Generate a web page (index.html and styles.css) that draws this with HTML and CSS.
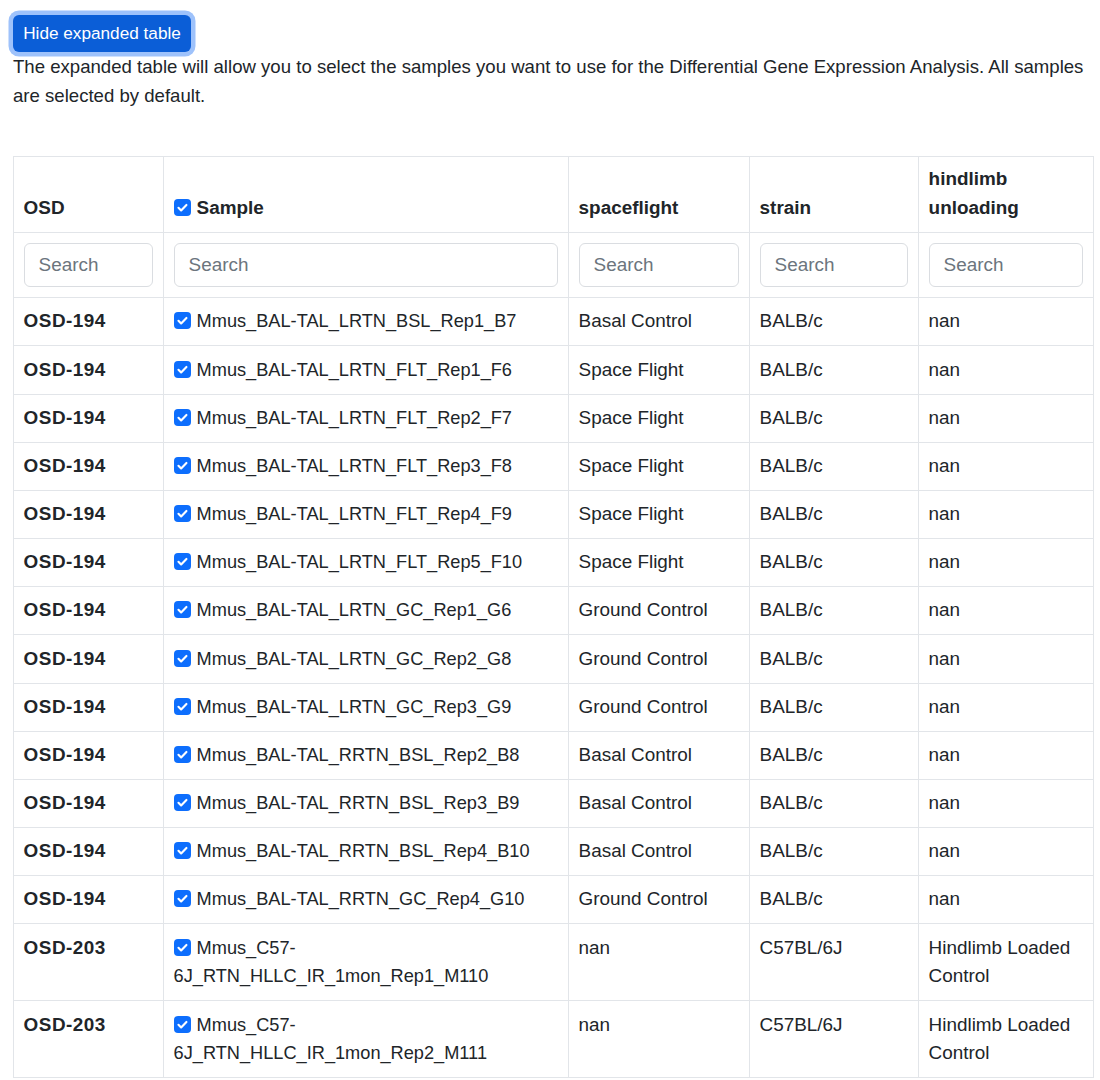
FILE: index.html
```html
<!DOCTYPE html>
<html lang="en">
<head>
<meta charset="utf-8">
<title>Expanded table</title>
<link rel="stylesheet" href="styles.css">
</head>
<body>
<div class="page">
  <button class="btn">Hide expanded table</button>
  <p class="intro">The expanded table will allow you to select the samples you want to use for the Differential Gene Expression Analysis. All samples are selected by default.</p>
  <table class="tbl">
    <colgroup>
      <col class="c-osd"><col class="c-sample"><col class="c-flight"><col class="c-strain"><col class="c-hind">
    </colgroup>
    <thead>
      <tr class="head">
        <th>OSD</th>
        <th><span class="cb"><svg viewBox="0 0 16 16"><path d="M4.2 8.3l2.5 2.5 5-5.2" fill="none" stroke="#fff" stroke-width="2" stroke-linecap="round" stroke-linejoin="round"/></svg></span>Sample</th>
        <th>spaceflight</th>
        <th>strain</th>
        <th>hindlimb unloading</th>
      </tr>
      <tr class="search">
        <th><input class="inp" placeholder="Search"></th>
        <th><input class="inp" placeholder="Search"></th>
        <th><input class="inp" placeholder="Search"></th>
        <th><input class="inp" placeholder="Search"></th>
        <th><input class="inp" placeholder="Search"></th>
      </tr>
    </thead>
    <tbody id="rows"></tbody>
  </table>
</div>
<script src="app.js"></script>
</body>
</html>
```
FILE: app.js
```js
const data = [
  ["OSD-194","Mmus_BAL-TAL_LRTN_BSL_Rep1_B7","Basal Control","BALB/c","nan"],
  ["OSD-194","Mmus_BAL-TAL_LRTN_FLT_Rep1_F6","Space Flight","BALB/c","nan"],
  ["OSD-194","Mmus_BAL-TAL_LRTN_FLT_Rep2_F7","Space Flight","BALB/c","nan"],
  ["OSD-194","Mmus_BAL-TAL_LRTN_FLT_Rep3_F8","Space Flight","BALB/c","nan"],
  ["OSD-194","Mmus_BAL-TAL_LRTN_FLT_Rep4_F9","Space Flight","BALB/c","nan"],
  ["OSD-194","Mmus_BAL-TAL_LRTN_FLT_Rep5_F10","Space Flight","BALB/c","nan"],
  ["OSD-194","Mmus_BAL-TAL_LRTN_GC_Rep1_G6","Ground Control","BALB/c","nan"],
  ["OSD-194","Mmus_BAL-TAL_LRTN_GC_Rep2_G8","Ground Control","BALB/c","nan"],
  ["OSD-194","Mmus_BAL-TAL_LRTN_GC_Rep3_G9","Ground Control","BALB/c","nan"],
  ["OSD-194","Mmus_BAL-TAL_RRTN_BSL_Rep2_B8","Basal Control","BALB/c","nan"],
  ["OSD-194","Mmus_BAL-TAL_RRTN_BSL_Rep3_B9","Basal Control","BALB/c","nan"],
  ["OSD-194","Mmus_BAL-TAL_RRTN_BSL_Rep4_B10","Basal Control","BALB/c","nan"],
  ["OSD-194","Mmus_BAL-TAL_RRTN_GC_Rep4_G10","Ground Control","BALB/c","nan"],
  ["OSD-203","Mmus_C57-6J_RTN_HLLC_IR_1mon_Rep1_M110","nan","C57BL/6J","Hindlimb Loaded Control"],
  ["OSD-203","Mmus_C57-6J_RTN_HLLC_IR_1mon_Rep2_M111","nan","C57BL/6J","Hindlimb Loaded Control"]
];
const check = '<span class="cb"><svg viewBox="0 0 16 16"><path d="M4.2 8.3l2.5 2.5 5-5.2" fill="none" stroke="#fff" stroke-width="2" stroke-linecap="round" stroke-linejoin="round"/></svg></span>';
const tb = document.getElementById('rows');
tb.innerHTML = data.map(r =>
  `<tr><td class="osd">${r[0]}</td><td class="sample">${check}${r[1]}</td><td>${r[2]}</td><td>${r[3]}</td><td>${r[4]}</td></tr>`
).join('');
```
FILE: styles.css
```css
html, body {
  margin: 0;
  padding: 0;
  background: #fff;
}
body {
  font-family: "Liberation Sans", Arial, sans-serif;
  font-size: 18.9px;
  line-height: 28.8px;
  color: #212529;
}
.page {
  padding: 15px 7px 0 13px;
}
.btn {
  display: block;
  height: 37px;
  width: 178px;
  padding: 0;
  border: none;
  border-radius: 6px;
  background: #0b5ed7;
  color: #fff;
  font-family: "Liberation Sans", Arial, sans-serif;
  font-size: 17.2px;
  box-shadow: 0 0 0 4.5px #9ec2fb;
}
.intro {
  font-size: 18.6px;
  margin: 1px 0 45px 0;
}
.tbl {
  width: 1080px;
  border-collapse: collapse;
  table-layout: fixed;
}
.c-osd { width: 150px; }
.c-sample { width: 405px; }
.c-flight { width: 181px; }
.c-strain { width: 169px; }
.c-hind { width: 175px; }
.tbl th, .tbl td {
  border: 1px solid #e2e5e9;
  padding: 9.2px 9.6px;
  text-align: left;
  vertical-align: top;
}
.tbl thead tr.head th {
  vertical-align: bottom;
  font-weight: bold;
  padding-top: 8.6px;
  padding-bottom: 9.4px;
}
.tbl tr.search th {
  padding: 10px 9.6px;
  font-weight: normal;
}
.osd {
  font-weight: bold;
  letter-spacing: 0.5px;
}
.sample {
  font-size: 18.2px;
}
.inp {
  display: block;
  box-sizing: border-box;
  width: 100%;
  height: 44px;
  border: 1px solid #dadde1;
  border-radius: 6px;
  padding: 0 14px;
  font-family: "Liberation Sans", Arial, sans-serif;
  font-size: 18.9px;
  color: #212529;
  background: #fff;
}
.inp::placeholder {
  color: #6c757d;
}
.cb {
  display: inline-block;
  width: 17px;
  height: 17px;
  border-radius: 4px;
  background: #0d6efd;
  vertical-align: -2px;
  margin-right: 6px;
}
.cb svg {
  display: block;
  width: 17px;
  height: 17px;
}
```
